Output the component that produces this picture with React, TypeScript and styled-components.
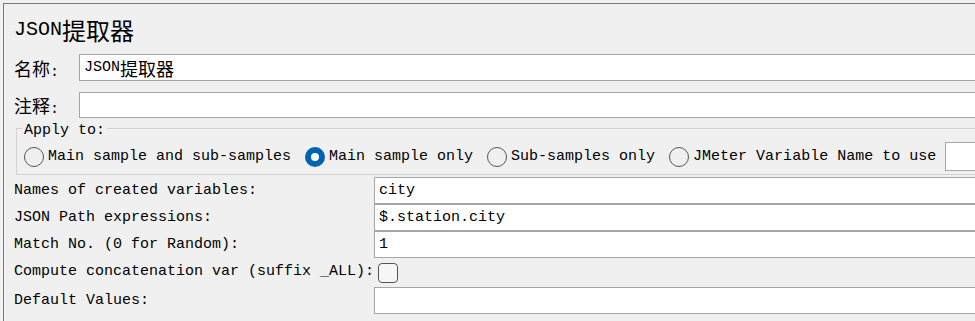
import React from "react";
import styled, { createGlobalStyle } from "styled-components";

const Global = createGlobalStyle`
  html, body { margin: 0; padding: 0; background: #f0f0f0; overflow: hidden; }
  body { font-family: "Liberation Mono", "Noto Sans CJK SC", monospace; font-size: 15px; color: #000; }
`;

const Panel = styled.div`
  margin: 3px 0 0 3px;
  width: 1010px;
  height: 330px;
  border-top: 1px solid #7a7a7a;
  border-left: 1px solid #7a7a7a;
  padding-left: 10px;
  box-sizing: border-box;
`;

const Title = styled.div`
  height: 50px;
  display: flex;
  align-items: center;
  font-size: 20px;
`;

const Cjk = styled.span<{ $size: number }>`
  font-family: "Noto Sans CJK SC", sans-serif;
  font-size: ${(p) => p.$size}px;
`;

const NameRow = styled.div<{ $mt: number }>`
  display: flex;
  align-items: center;
  margin-top: ${(p) => p.$mt}px;
`;

const NameLabel = styled.div`
  width: 65px;
  flex: none;
`;

const TextInput = styled.div<{ $h: number }>`
  flex: 1;
  height: ${(p) => p.$h}px;
  box-sizing: border-box;
  background: #fff;
  border: 1px solid #a6a6a6;
  display: flex;
  align-items: center;
  padding-left: 4px;
  white-space: pre;
`;

const Group = styled.div`
  position: relative;
  margin: 10px 0 0 2px;
  height: 47px;
  box-sizing: border-box;
  border: 1px solid #d3d3d3;
  border-right: none;
  padding: 13px 0 0 7px;
`;

const Legend = styled.span`
  position: absolute;
  top: -7px;
  left: 5px;
  padding: 0 2px;
  background: #f0f0f0;
  line-height: 18px;
`;

const RadioRow = styled.div`
  display: flex;
  align-items: center;
  gap: 14px;
`;

const RadioItem = styled.label`
  display: flex;
  align-items: center;
  gap: 4px;
  white-space: nowrap;
`;

const RadioCircle = styled.span<{ $on?: boolean }>`
  width: 20px;
  height: 20px;
  box-sizing: border-box;
  border-radius: 50%;
  flex: none;
  display: flex;
  align-items: center;
  justify-content: center;
  border: ${(p) => (p.$on ? "none" : "1px solid #555")};
  background: ${(p) => (p.$on ? "#0063b1" : "transparent")};
  &::after {
    content: "";
    display: ${(p) => (p.$on ? "block" : "none")};
    width: 8px;
    height: 8px;
    border-radius: 50%;
    background: #fff;
  }
`;

const VarInput = styled.div`
  flex: 1;
  height: 29px;
  margin-left: -5px;
  background: #fff;
  border: 1px solid #a6a6a6;
  box-sizing: border-box;
`;

const Grid = styled.div`
  display: grid;
  grid-template-columns: 360px 1fr;
  margin-top: 2px;
`;

const GridLabel = styled.div`
  display: flex;
  align-items: center;
  height: 27px;
  white-space: nowrap;
`;

const Check = styled.span`
  width: 20px;
  height: 20px;
  box-sizing: border-box;
  border: 1px solid #555;
  border-radius: 4px;
  margin-left: 4px;
  background: #f7f7f7;
`;

const CheckCell = styled.div`
  display: flex;
  align-items: center;
  height: 29px;
`;

const radios = [
  { label: "Main sample and sub-samples", on: false },
  { label: "Main sample only", on: true },
  { label: "Sub-samples only", on: false },
  { label: "JMeter Variable Name to use", on: false },
];

const rows = [
  { label: "Names of created variables:", value: "city" },
  { label: "JSON Path expressions:", value: "$.station.city" },
  { label: "Match No. (0 for Random):", value: "1" },
];

export default function App() {
  return (
    <>
      <Global />
      <Panel>
        <Title>
          JSON<Cjk $size={24}>提取器</Cjk>
        </Title>
        <NameRow $mt={0}>
          <NameLabel>
            <Cjk $size={18}>名称</Cjk>:
          </NameLabel>
          <TextInput $h={27}>
            JSON<Cjk $size={18}>提取器</Cjk>
          </TextInput>
        </NameRow>
        <NameRow $mt={11}>
          <NameLabel>
            <Cjk $size={18}>注释</Cjk>:
          </NameLabel>
          <TextInput $h={26} />
        </NameRow>
        <Group>
          <Legend>Apply to:</Legend>
          <RadioRow>
            {radios.map((r) => (
              <RadioItem key={r.label}>
                <RadioCircle $on={r.on} />
                {r.label}
              </RadioItem>
            ))}
            <VarInput />
          </RadioRow>
        </Group>
        <Grid>
          {rows.map((r) => (
            <React.Fragment key={r.label}>
              <GridLabel>{r.label}</GridLabel>
              <TextInput $h={27}>{r.value}</TextInput>
            </React.Fragment>
          ))}
          <GridLabel>Compute concatenation var (suffix _ALL):</GridLabel>
          <CheckCell>
            <Check />
          </CheckCell>
          <GridLabel>Default Values:</GridLabel>
          <TextInput $h={27} />
        </Grid>
      </Panel>
    </>
  );
}
